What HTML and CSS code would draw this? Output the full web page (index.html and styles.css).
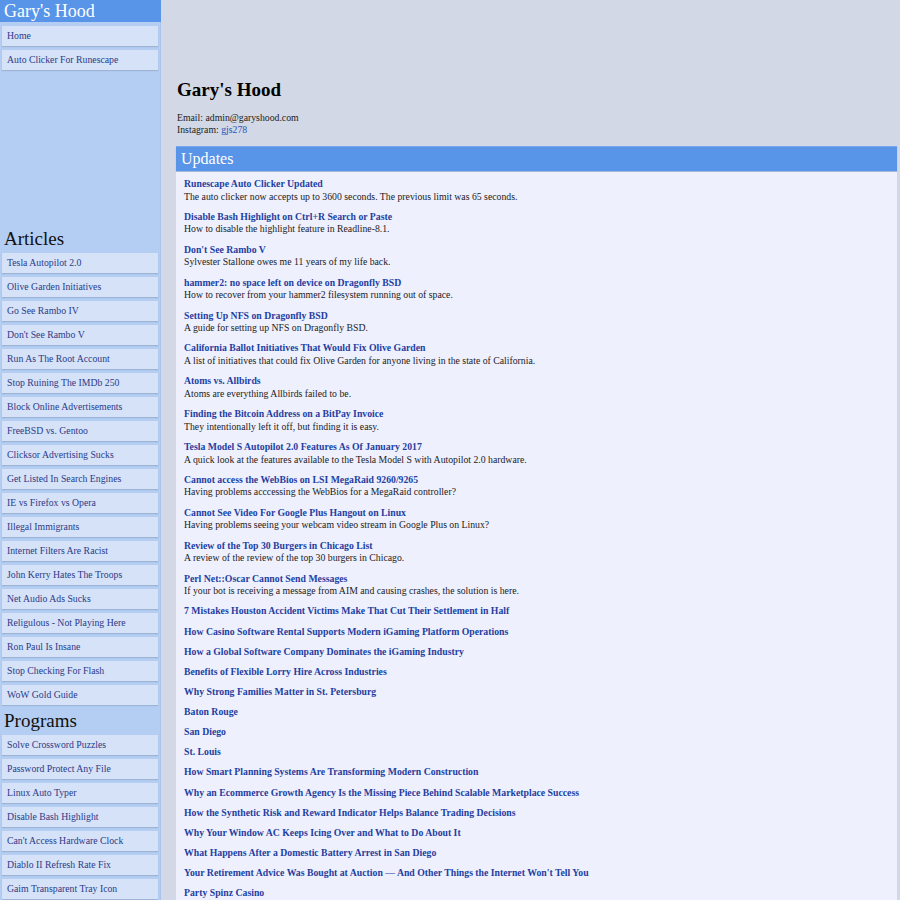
FILE: index.html
```html
<!DOCTYPE html>
<html>
<head>
<meta charset="utf-8">
<title>Gary's Hood</title>
<link rel="stylesheet" href="styles.css">
</head>
<body>
<div class="page">
  <aside class="sidebar">
    <div class="brand">Gary's Hood</div>
    <nav class="menu">
      <a class="menu-item" href="#">Home</a>
      <a class="menu-item" href="#">Auto Clicker For Runescape</a>
    </nav>
    <div class="spacer"></div>
    <h2 class="side-heading">Articles</h2>
    <nav class="menu">
      <a class="menu-item" href="#">Tesla Autopilot 2.0</a>
      <a class="menu-item" href="#">Olive Garden Initiatives</a>
      <a class="menu-item" href="#">Go See Rambo IV</a>
      <a class="menu-item" href="#">Don't See Rambo V</a>
      <a class="menu-item" href="#">Run As The Root Account</a>
      <a class="menu-item" href="#">Stop Ruining The IMDb 250</a>
      <a class="menu-item" href="#">Block Online Advertisements</a>
      <a class="menu-item" href="#">FreeBSD vs. Gentoo</a>
      <a class="menu-item" href="#">Clicksor Advertising Sucks</a>
      <a class="menu-item" href="#">Get Listed In Search Engines</a>
      <a class="menu-item" href="#">IE vs Firefox vs Opera</a>
      <a class="menu-item" href="#">Illegal Immigrants</a>
      <a class="menu-item" href="#">Internet Filters Are Racist</a>
      <a class="menu-item" href="#">John Kerry Hates The Troops</a>
      <a class="menu-item" href="#">Net Audio Ads Sucks</a>
      <a class="menu-item" href="#">Religulous - Not Playing Here</a>
      <a class="menu-item" href="#">Ron Paul Is Insane</a>
      <a class="menu-item" href="#">Stop Checking For Flash</a>
      <a class="menu-item" href="#">WoW Gold Guide</a>
    </nav>
    <h2 class="side-heading">Programs</h2>
    <nav class="menu">
      <a class="menu-item" href="#">Solve Crossword Puzzles</a>
      <a class="menu-item" href="#">Password Protect Any File</a>
      <a class="menu-item" href="#">Linux Auto Typer</a>
      <a class="menu-item" href="#">Disable Bash Highlight</a>
      <a class="menu-item" href="#">Can't Access Hardware Clock</a>
      <a class="menu-item" href="#">Diablo II Refresh Rate Fix</a>
      <a class="menu-item" href="#">Gaim Transparent Tray Icon</a>
    </nav>
  </aside>
  <main class="main">
    <h1 class="site-title">Gary's Hood</h1>
    <div class="contact">
      <div>Email: admin@garyshood.com</div>
      <div>Instagram: <a class="contact-link" href="#">gjs278</a></div>
    </div>
    <section class="updates">
      <div class="updates-head">Updates</div>
      <div class="updates-body">
        <div class="entry"><a class="entry-title" href="#">Runescape Auto Clicker Updated</a><div class="entry-desc">The auto clicker now accepts up to 3600 seconds. The previous limit was 65 seconds.</div></div>
        <div class="entry"><a class="entry-title" href="#">Disable Bash Highlight on Ctrl+R Search or Paste</a><div class="entry-desc">How to disable the highlight feature in Readline-8.1.</div></div>
        <div class="entry"><a class="entry-title" href="#">Don't See Rambo V</a><div class="entry-desc">Sylvester Stallone owes me 11 years of my life back.</div></div>
        <div class="entry"><a class="entry-title" href="#">hammer2: no space left on device on Dragonfly BSD</a><div class="entry-desc">How to recover from your hammer2 filesystem running out of space.</div></div>
        <div class="entry"><a class="entry-title" href="#">Setting Up NFS on Dragonfly BSD</a><div class="entry-desc">A guide for setting up NFS on Dragonfly BSD.</div></div>
        <div class="entry"><a class="entry-title" href="#">California Ballot Initiatives That Would Fix Olive Garden</a><div class="entry-desc">A list of initiatives that could fix Olive Garden for anyone living in the state of California.</div></div>
        <div class="entry"><a class="entry-title" href="#">Atoms vs. Allbirds</a><div class="entry-desc">Atoms are everything Allbirds failed to be.</div></div>
        <div class="entry"><a class="entry-title" href="#">Finding the Bitcoin Address on a BitPay Invoice</a><div class="entry-desc">They intentionally left it off, but finding it is easy.</div></div>
        <div class="entry"><a class="entry-title" href="#">Tesla Model S Autopilot 2.0 Features As Of January 2017</a><div class="entry-desc">A quick look at the features available to the Tesla Model S with Autopilot 2.0 hardware.</div></div>
        <div class="entry"><a class="entry-title" href="#">Cannot access the WebBios on LSI MegaRaid 9260/9265</a><div class="entry-desc">Having problems acccessing the WebBios for a MegaRaid controller?</div></div>
        <div class="entry"><a class="entry-title" href="#">Cannot See Video For Google Plus Hangout on Linux</a><div class="entry-desc">Having problems seeing your webcam video stream in Google Plus on Linux?</div></div>
        <div class="entry"><a class="entry-title" href="#">Review of the Top 30 Burgers in Chicago List</a><div class="entry-desc">A review of the review of the top 30 burgers in Chicago.</div></div>
        <div class="entry"><a class="entry-title" href="#">Perl Net::Oscar Cannot Send Messages</a><div class="entry-desc">If your bot is receiving a message from AIM and causing crashes, the solution is here.</div></div>
        <div class="entry"><a class="entry-title" href="#">7 Mistakes Houston Accident Victims Make That Cut Their Settlement in Half</a></div>
        <div class="entry"><a class="entry-title" href="#">How Casino Software Rental Supports Modern iGaming Platform Operations</a></div>
        <div class="entry"><a class="entry-title" href="#">How a Global Software Company Dominates the iGaming Industry</a></div>
        <div class="entry"><a class="entry-title" href="#">Benefits of Flexible Lorry Hire Across Industries</a></div>
        <div class="entry"><a class="entry-title" href="#">Why Strong Families Matter in St. Petersburg</a></div>
        <div class="entry"><a class="entry-title" href="#">Baton Rouge</a></div>
        <div class="entry"><a class="entry-title" href="#">San Diego</a></div>
        <div class="entry"><a class="entry-title" href="#">St. Louis</a></div>
        <div class="entry"><a class="entry-title" href="#">How Smart Planning Systems Are Transforming Modern Construction</a></div>
        <div class="entry"><a class="entry-title" href="#">Why an Ecommerce Growth Agency Is the Missing Piece Behind Scalable Marketplace Success</a></div>
        <div class="entry"><a class="entry-title" href="#">How the Synthetic Risk and Reward Indicator Helps Balance Trading Decisions</a></div>
        <div class="entry"><a class="entry-title" href="#">Why Your Window AC Keeps Icing Over and What to Do About It</a></div>
        <div class="entry"><a class="entry-title" href="#">What Happens After a Domestic Battery Arrest in San Diego</a></div>
        <div class="entry"><a class="entry-title" href="#">Your Retirement Advice Was Bought at Auction — And Other Things the Internet Won't Tell You</a></div>
        <div class="entry"><a class="entry-title" href="#">Party Spinz Casino</a></div>
      </div>
    </section>
  </main>
</div>
</body>
</html>
```

FILE: styles.css
```css
html, body {
  margin: 0;
  padding: 0;
}
body {
  background: #d2d8e5;
  font-family: "Liberation Serif", "Times New Roman", serif;
  font-size: 9.75px;
  color: #222;
  height: 900px;
  overflow: hidden;
}
a {
  color: #1f3f9f;
  text-decoration: none;
}
.page {
  display: flex;
  align-items: flex-start;
}
.sidebar {
  width: 161px;
  flex: none;
  background: #b3cdf3;
  min-height: 900px;
  box-shadow: inset -1px 0 0 #a9c3ea;
}
.brand {
  background: #5894e8;
  color: #fff;
  font-size: 18px;
  line-height: 22px;
  height: 22px;
  padding-left: 4px;
  margin-bottom: 1px;
}
.menu {
  display: flex;
  flex-direction: column;
  gap: 4px;
  padding: 3px 3px 0 2px;
}
.menu-item {
  display: block;
  background: #d5e2f7;
  color: #2b3b8a;
  height: 20px;
  line-height: 20px;
  padding-left: 5px;
  box-shadow: 0 1px 1px #9fb4d4;
  white-space: nowrap;
}
.spacer {
  height: 153px;
}
.side-heading {
  margin: 0;
  font-weight: normal;
  font-size: 19px;
  line-height: 22px;
  height: 22px;
  padding: 5px 0 0 4px;
  color: #111;
}
.main {
  flex: 1;
  padding: 0 3px 0 15px;
}
.site-title {
  margin: 79px 0 0 0;
  font-size: 19px;
  line-height: 22px;
  font-weight: bold;
  color: #000;
  padding-left: 1px;
}
.contact {
  margin-top: 11px;
  line-height: 12px;
  padding-left: 1px;
  color: #222;
}
.contact-link {
  color: #2a52b8;
}
.updates {
  margin-top: 10px;
}
.updates-head {
  background: #5894e8;
  color: #fff;
  font-size: 16px;
  line-height: 24px;
  height: 24px;
  padding-left: 5px;
  box-shadow: 0 1px 1px #a8b9d8;
  border-top: 1px solid #78a8ec;
}
.updates-body {
  background: #eef0fe;
  margin-top: 1px;
  padding: 0 8px;
}
.entry {
  padding: 6px 0 1.54px 0;
  line-height: 12.6px;
}
.entry-title {
  display: block;
  font-weight: bold;
  color: #1f3f9f;
  white-space: nowrap;
}
.entry-desc {
  color: #222;
  line-height: 12.75px;
}
```
